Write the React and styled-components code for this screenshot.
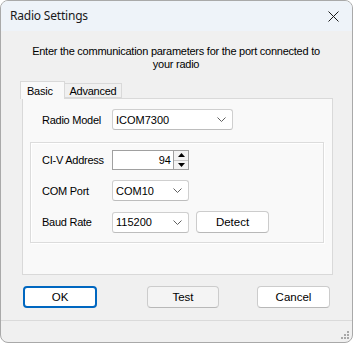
import React from "react";
import styled, { createGlobalStyle } from "styled-components";

const Global = createGlobalStyle`
  html, body { margin: 0; padding: 0; background: #ffffff; }
  body { width: 354px; height: 343px; overflow: hidden; }
  * { box-sizing: border-box; }
`;

const Window = styled.div`
  width: 353px;
  height: 343px;
  border: 1px solid #a9a9a9;
  border-radius: 8px;
  overflow: hidden;
  display: flex;
  flex-direction: column;
  background: #f0f0f0;
  font-family: "Liberation Sans", Arial, sans-serif;
  font-size: 11px;
  letter-spacing: -0.25px;
  color: #000;
`;

const TitleBar = styled.div`
  height: 30px;
  flex: none;
  background: #eef3f9;
  display: flex;
  align-items: center;
  justify-content: space-between;
  padding-left: 9px;
`;

const TitleText = styled.span`
  font-family: "Segoe UI", "Noto Sans", sans-serif;
  font-size: 12px;
  letter-spacing: -0.2px;
  color: #1a1a1a;
  padding-bottom: 1px;
`;

const CloseButton = styled.div`
  width: 44px;
  height: 30px;
  display: flex;
  align-items: center;
  justify-content: center;
  padding-left: 6px;
`;

const Body = styled.div`
  flex: 1;
  display: flex;
  flex-direction: column;
`;

const Description = styled.div`
  text-align: center;
  line-height: 13px;
  padding: 14px 0 0 0;
  margin-left: -1px;
`;

const Tabs = styled.div`
  margin: 10px 0 0 19px;
  display: flex;
  flex-direction: column;
`;

const TabStrip = styled.div`
  display: flex;
  align-items: flex-end;
  height: 17px;
  position: relative;
  z-index: 1;
`;

const Tab = styled.div`
  height: ${(p) => (p.$active ? "18px" : "15px")};
  margin-bottom: ${(p) => (p.$active ? "-1px" : "0")};
  padding: 0 ${(p) => (p.$active ? "6px" : "5px")};
  padding-top: ${(p) => (p.$active ? "0" : "1px")};
  display: flex;
  align-items: center;
  background: ${(p) => (p.$active ? "#f9f9f9" : "#f0f0f0")};
  border: 1px solid #d9d9d9;
  border-bottom: ${(p) => (p.$active ? "none" : "1px solid #d9d9d9")};
  margin-left: ${(p) => (p.$active ? "0" : "-1px")};
  width: ${(p) => p.$w}px;
  justify-content: ${(p) => (p.$active ? "flex-start" : "center")};
`;

const Panel = styled.div`
  margin-left: 2px;
  width: 311px;
  height: 177px;
  border: 1px solid #d9d9d9;
  background: #f9f9f9;
  padding: 10px 8px 0 7px;
  display: flex;
  flex-direction: column;
`;

const Row = styled.div`
  display: flex;
  align-items: center;
  padding-left: ${(p) => p.$indent || 0}px;
`;

const Label = styled.span`
  width: 70px;
  flex: none;
`;

const Combo = styled.div`
  width: ${(p) => p.$w}px;
  height: 21px;
  background: #ffffff;
  border: 1px solid #cfcfcf;
  border-bottom-color: #bdbdbd;
  border-radius: 3px;
  display: flex;
  align-items: center;
  justify-content: space-between;
  padding: 0 6px 0 3px;
  letter-spacing: 0;
`;

const Group = styled.div`
  margin-top: 12px;
  height: 101px;
  border: 1px solid #dcdcdc;
  box-shadow: inset 1px 1px 0 #ffffff, 1px 1px 0 #ffffff;
  padding: 7px 0 0 11px;
  display: flex;
  flex-direction: column;
  gap: 10px;
`;

const Numeric = styled.div`
  width: 77px;
  height: 20px;
  background: #ffffff;
  border: 1px solid #a0a0a0;
  display: flex;
  align-items: stretch;
  letter-spacing: 0;
`;

const NumericText = styled.span`
  flex: 1;
  text-align: right;
  padding-right: 2px;
  line-height: 18px;
`;

const Spinner = styled.div`
  width: 15px;
  display: flex;
  flex-direction: column;
  border-left: 1px solid #a0a0a0;
`;

const SpinHalf = styled.div`
  flex: 1;
  display: flex;
  align-items: center;
  justify-content: center;
  background: #f3f3f3;
  border-top: ${(p) => (p.$bottom ? "1px solid #c8c8c8" : "none")};
`;

const Button = styled.div`
  flex: none;
  width: ${(p) => p.$w || 73}px;
  height: 22px;
  border-radius: 4px;
  border: ${(p) => (p.$default ? "2px solid #0067c0" : "1px solid #cccccc")};
  border-bottom-color: ${(p) => (p.$default ? "#0067c0" : "#b8b8b8")};
  background: ${(p) => (p.$gray ? "#f4f4f4" : "#ffffff")};
  display: flex;
  align-items: center;
  justify-content: center;
  letter-spacing: 0;
  font-size: 11.5px;
  margin-left: ${(p) => p.$ml || 0}px;
`;

const ButtonRow = styled.div`
  display: flex;
  padding: 11px 0 0 22px;
`;

const StatusStrip = styled.div`
  margin-top: 12px;
  flex: 1;
  border-top: 1px solid #dadada;
  display: flex;
  justify-content: flex-end;
  align-items: flex-end;
  padding: 0 2px 2px 0;
`;

const Chevron = () => (
  <svg width="9" height="5" viewBox="0 0 9 5">
    <path d="M0.5 0.5 L4.5 4.5 L8.5 0.5" fill="none" stroke="#5f5f5f" strokeWidth="1" />
  </svg>
);

const Arrow = ({ up }) => (
  <svg width="7" height="4" viewBox="0 0 7 4">
    <path d={up ? "M0 4 L3.5 0 L7 4 Z" : "M0 0 L3.5 4 L7 0 Z"} fill="#000" />
  </svg>
);

const Grip = () => (
  <svg width="10" height="10" viewBox="0 0 10 10">
    {[
      [8, 2],
      [5, 5],
      [8, 5],
      [2, 8],
      [5, 8],
      [8, 8],
    ].map(([x, y]) => (
      <rect key={`${x}-${y}`} x={x - 1} y={y - 1} width="2" height="2" fill="#a8a8a8" />
    ))}
  </svg>
);

export default function App() {
  return (
    <>
      <Global />
      <Window>
        <TitleBar>
          <TitleText>Radio Settings</TitleText>
          <CloseButton>
            <svg width="11" height="11" viewBox="0 0 11 11">
              <path d="M0.5 0.5 L10.5 10.5 M10.5 0.5 L0.5 10.5" stroke="#1a1a1a" strokeWidth="1" />
            </svg>
          </CloseButton>
        </TitleBar>
        <Body>
          <Description>
            Enter the communication parameters for the port connected to
            <br />
            your radio
          </Description>
          <Tabs>
            <TabStrip>
              <Tab $active $w={45}>Basic</Tab>
              <Tab $w={58}>Advanced</Tab>
            </TabStrip>
            <Panel>
              <Row $indent={12}>
                <Label>Radio Model</Label>
                <Combo $w={121}>
                  <span>ICOM7300</span>
                  <Chevron />
                </Combo>
              </Row>
              <Group>
                <Row>
                  <Label>CI-V Address</Label>
                  <Numeric>
                    <NumericText>94</NumericText>
                    <Spinner>
                      <SpinHalf>
                        <Arrow up />
                      </SpinHalf>
                      <SpinHalf $bottom>
                        <Arrow />
                      </SpinHalf>
                    </Spinner>
                  </Numeric>
                </Row>
                <Row>
                  <Label>COM Port</Label>
                  <Combo $w={77}>
                    <span>COM10</span>
                    <Chevron />
                  </Combo>
                </Row>
                <Row>
                  <Label>Baud Rate</Label>
                  <Combo $w={77}>
                    <span>115200</span>
                    <Chevron />
                  </Combo>
                  <Button $w={73} $ml={7}>Detect</Button>
                </Row>
              </Group>
            </Panel>
          </Tabs>
          <ButtonRow>
            <Button $default $w={74}>OK</Button>
            <Button $gray $w={72} $ml={50}>Test</Button>
            <Button $w={73} $ml={38}>Cancel</Button>
          </ButtonRow>
          <StatusStrip>
            <Grip />
          </StatusStrip>
        </Body>
      </Window>
    </>
  );
}
